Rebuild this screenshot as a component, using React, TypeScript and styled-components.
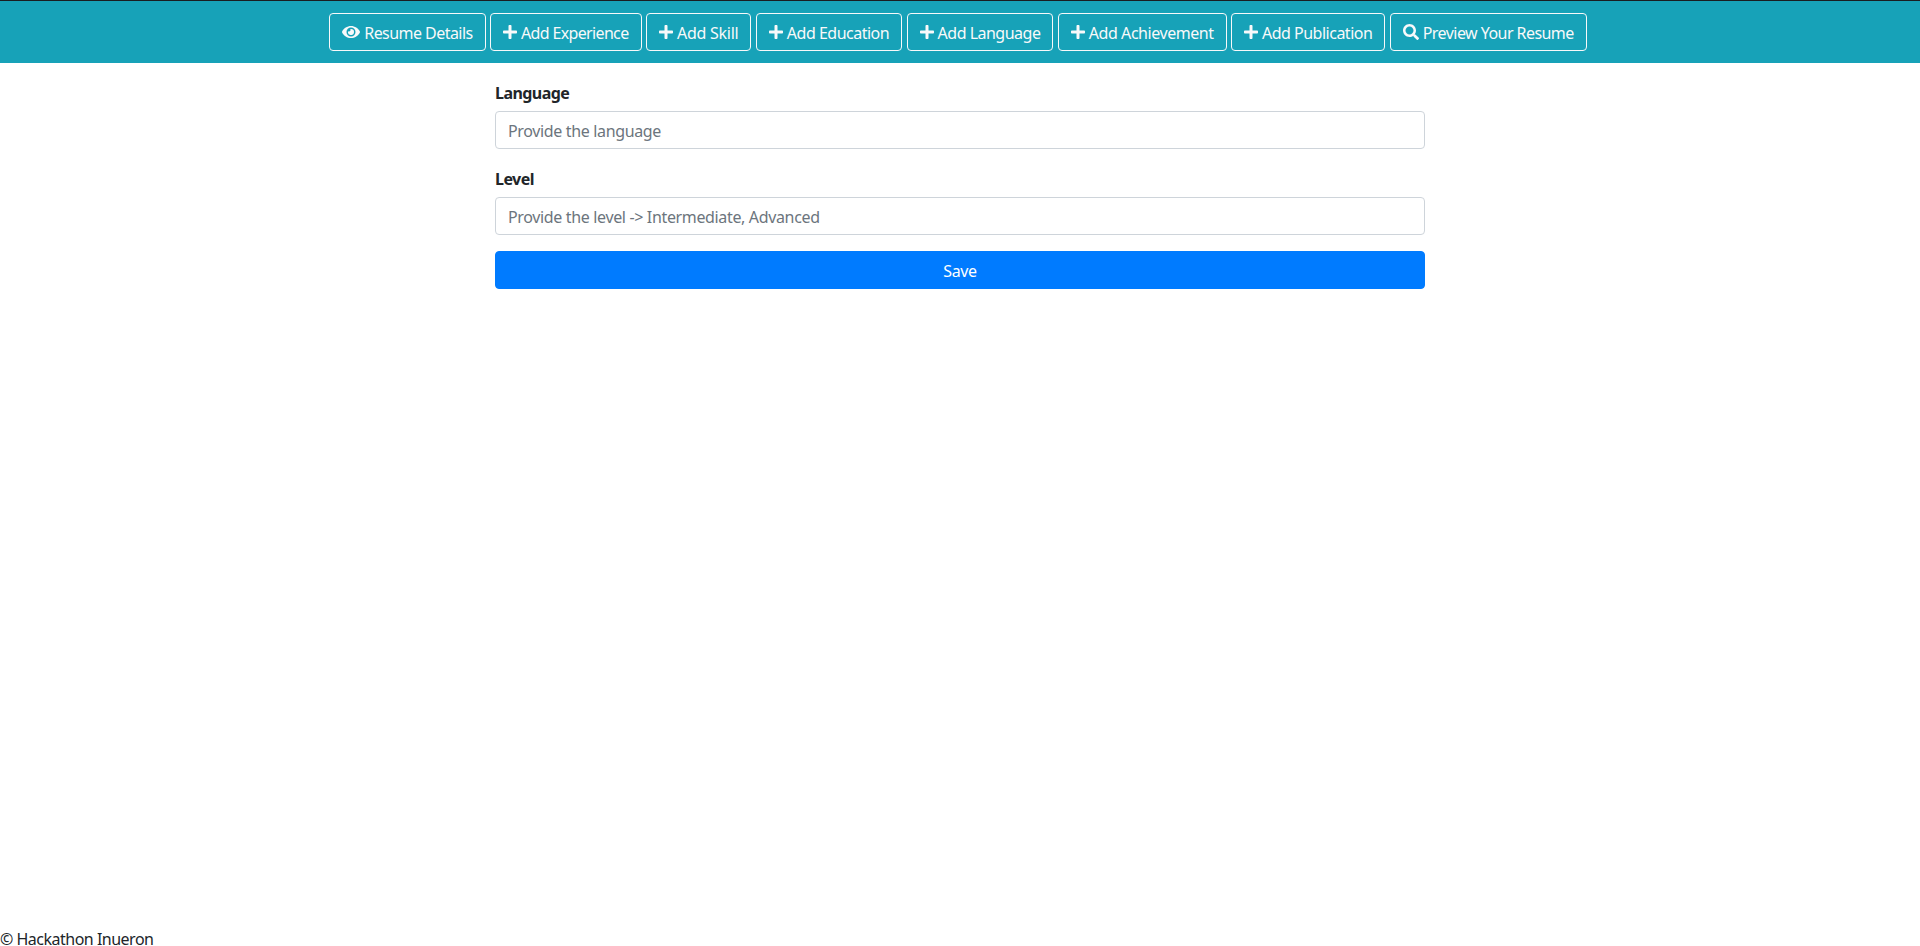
import React from "react";
import styled, { createGlobalStyle } from "styled-components";
import { FaEye, FaPlus, FaSearch } from "react-icons/fa";

const GlobalStyle = createGlobalStyle`
  html, body {
    margin: 0;
    padding: 0;
    background: #fff;
  }
  body {
    font-family: "Noto Sans", "Open Sans", sans-serif;
    font-size: 16px;
    line-height: 1.5;
    color: #212529;
  }
  * {
    box-sizing: border-box;
  }
`;

const Page = styled.div`
  display: flex;
  flex-direction: column;
  height: 100vh;
`;

// Teal nav strip on top
const Toolbar = styled.nav`
  display: flex;
  justify-content: center;
  gap: 4.4px;
  height: 63px;
  padding: 12px 4px 0 0;
  background: #17a2b8;
  border-top: 1px solid #1a1d20;
`;

const NavButton = styled.button<{ $tracking: number }>`
  display: inline-flex;
  align-items: center;
  gap: 4px;
  height: 38px;
  padding: 2px 12px 0;
  border: 1px solid #f8f9fa;
  border-radius: 4px;
  background: transparent;
  color: #f8f9fa;
  font: inherit;
  letter-spacing: ${(p) => p.$tracking}px;
  white-space: nowrap;
`;

// react-icons renders 1em square, the originals are wider or narrower
const IconSlot = styled.span<{ $width: number }>`
  display: inline-flex;
  margin-top: -2px;

  svg {
    width: ${(p) => p.$width}px;
    height: 16px;
  }
`;

const Form = styled.form`
  width: 930px;
  margin: 0 auto;
  padding-top: 16px;
`;

const Field = styled.div`
  margin-bottom: 16px;
`;

const Label = styled.label`
  display: block;
  margin-bottom: 6px;
  padding-top: 2px;
  font-weight: 700;
  font-size: 16px;
  letter-spacing: -0.55px;
`;

const Input = styled.input`
  display: block;
  width: 100%;
  height: 38px;
  padding: 7px 12px 5px;
  border: 1px solid #ced4da;
  border-radius: 4px;
  background: #fff;
  color: #495057;
  font: inherit;
  letter-spacing: -0.35px;

  &::placeholder {
    color: #6c757d;
    opacity: 1;
  }
`;

const SaveButton = styled.button`
  display: block;
  width: 100%;
  height: 38px;
  padding: 2px 0 0;
  border: 1px solid #007bff;
  border-radius: 4px;
  background: #007bff;
  color: #fff;
  font: inherit;
  letter-spacing: -0.35px;
`;

const Footer = styled.footer`
  margin-top: auto;
  line-height: 14px;
  letter-spacing: -0.5px;
`;

const navItems = [
  { label: "Resume Details", icon: <FaEye />, width: 18, tracking: -0.55 },
  { label: "Add Experience", icon: <FaPlus />, width: 14, tracking: -0.65 },
  { label: "Add Skill", icon: <FaPlus />, width: 14, tracking: -0.25 },
  { label: "Add Education", icon: <FaPlus />, width: 14, tracking: -0.5 },
  { label: "Add Language", icon: <FaPlus />, width: 14, tracking: -0.5 },
  { label: "Add Achievement", icon: <FaPlus />, width: 14, tracking: -0.45 },
  { label: "Add Publication", icon: <FaPlus />, width: 14, tracking: -0.5 },
  { label: "Preview Your Resume", icon: <FaSearch />, width: 16, tracking: -0.55 },
];

const App: React.FC = () => {
  return (
    <Page>
      <GlobalStyle />
      <Toolbar>
        {navItems.map((item) => (
          <NavButton type="button" key={item.label} $tracking={item.tracking}>
            <IconSlot $width={item.width}>{item.icon}</IconSlot>
            {item.label}
          </NavButton>
        ))}
      </Toolbar>
      <Form>
        <Field>
          <Label htmlFor="language">Language</Label>
          <Input id="language" placeholder="Provide the language" />
        </Field>
        <Field>
          <Label htmlFor="level">Level</Label>
          <Input id="level" placeholder="Provide the level -> Intermediate, Advanced" />
        </Field>
        <SaveButton type="button">Save</SaveButton>
      </Form>
      <Footer>© Hackathon Inueron</Footer>
    </Page>
  );
};

export default App;
